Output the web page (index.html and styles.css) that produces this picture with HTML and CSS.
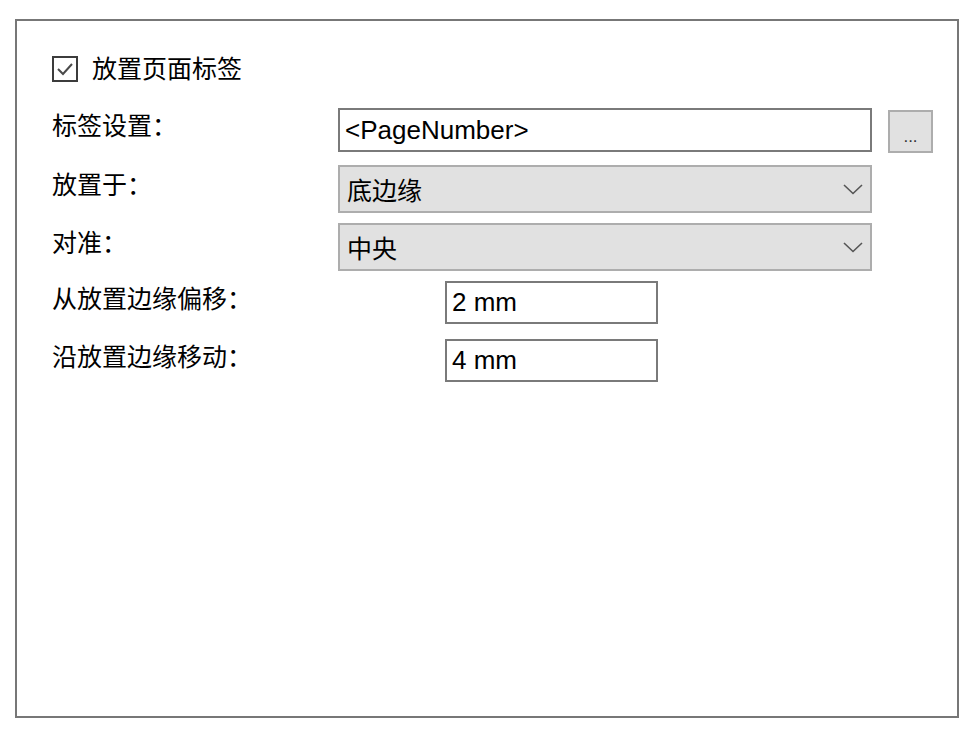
FILE: index.html
```html
<!DOCTYPE html>
<html lang="zh">
<head>
<meta charset="utf-8">
<title>放置页面标签</title>
<link rel="stylesheet" href="styles.css">
</head>
<body>
<div class="panel">
  <div class="check-row">
    <span class="checkbox">
      <svg width="22" height="22" viewBox="0 0 22 22"><polyline points="4,11 9,16 18,6" fill="none" stroke="#4a4a4a" stroke-width="2"/></svg>
    </span>
    <span class="check-label">放置页面标签</span>
  </div>

  <div class="row row-1">
    <span class="label">标签设置：</span>
    <div class="textbox wide">&lt;PageNumber&gt;</div>
    <div class="dots-btn">...</div>
  </div>

  <div class="row row-2">
    <span class="label">放置于：</span>
    <div class="combo">
      <span>底边缘</span>
      <svg class="chev" width="20" height="11" viewBox="0 0 20 11"><polyline points="1,1 10,9.5 19,1" fill="none" stroke="#555" stroke-width="1.6"/></svg>
    </div>
  </div>

  <div class="row row-3">
    <span class="label">对准：</span>
    <div class="combo">
      <span>中央</span>
      <svg class="chev" width="20" height="11" viewBox="0 0 20 11"><polyline points="1,1 10,9.5 19,1" fill="none" stroke="#555" stroke-width="1.6"/></svg>
    </div>
  </div>

  <div class="row row-4">
    <span class="label">从放置边缘偏移：</span>
    <div class="textbox num">2 mm</div>
  </div>

  <div class="row row-5">
    <span class="label">沿放置边缘移动：</span>
    <div class="textbox num">4 mm</div>
  </div>
</div>
</body>
</html>
```

FILE: styles.css
```css
html, body {
  margin: 0;
  padding: 0;
  background: #ffffff;
}

body {
  font-family: "Noto Sans CJK SC", "Liberation Sans", sans-serif;
  color: #000;
}

.panel {
  margin: 19px 0 0 15px;
  width: 944px;
  height: 699px;
  box-sizing: border-box;
  border: 2px solid #777777;
  padding: 34px 0 0 35px;
  display: flex;
  flex-direction: column;
}

.check-row {
  display: flex;
  align-items: center;
  height: 27px;
}

.checkbox {
  width: 26px;
  height: 26px;
  box-sizing: border-box;
  border: 2px solid #3c3c3c;
  display: flex;
  align-items: center;
  justify-content: center;
}

.check-label {
  margin-left: 14px;
  font-size: 25px;
  line-height: 27px;
  padding-bottom: 2px;
}

.row {
  display: flex;
  align-items: center;
}

.row-1 { margin-top: 26px; height: 44px; }
.row-2 { margin-top: 13px; height: 48px; }
.row-3 { margin-top: 10px; height: 48px; }
.row-4 { margin-top: 10px; height: 43px; }
.row-5 { margin-top: 15px; height: 43px; }

.label {
  width: 286px;
  flex: none;
  font-size: 25px;
  line-height: 30px;
  padding-bottom: 12px;
}

.textbox {
  box-sizing: border-box;
  height: 100%;
  border: 2px solid #7a7a7a;
  background: #fff;
  font-family: "Liberation Sans", Arial, sans-serif;
  font-size: 26px;
  display: flex;
  align-items: center;
  padding-left: 5px;
}

.textbox.wide {
  width: 534px;
}

.textbox.num {
  width: 213px;
  margin-left: 107px;
}

.dots-btn {
  box-sizing: border-box;
  width: 45px;
  height: 43px;
  align-self: flex-start;
  margin-top: 2px;
  margin-left: 16px;
  background: #e1e1e1;
  border: 2px solid #adadad;
  font-family: "Liberation Sans", Arial, sans-serif;
  font-size: 17px;
  color: #333;
  display: flex;
  justify-content: center;
  align-items: flex-end;
  padding-bottom: 6px;
  line-height: 17px;
}

.combo {
  box-sizing: border-box;
  width: 534px;
  height: 100%;
  background: #e1e1e1;
  border: 2px solid #adadad;
  display: flex;
  align-items: center;
  justify-content: space-between;
  padding: 0 7px 0 7px;
  font-size: 25px;
}

.chev {
  margin-top: 1px;
}
```
